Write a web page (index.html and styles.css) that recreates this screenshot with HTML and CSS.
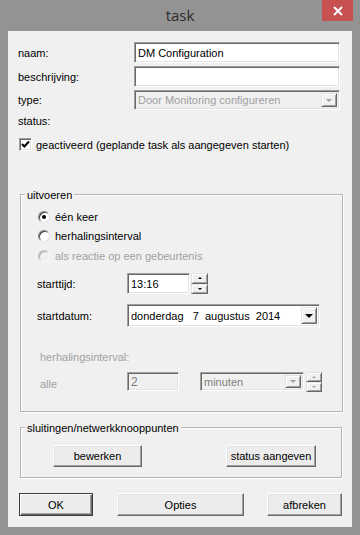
FILE: index.html
```html
<!DOCTYPE html>
<html lang="nl">
<head>
    <meta charset="UTF-8">
    <meta name="viewport" content="width=device-width, initial-scale=1.0">
    <title>task</title>
    <link rel="stylesheet" href="styles.css">
</head>
<body>
    <div class="window">
        <div class="titlebar">
            <span class="title">task</span>
            <div class="close">
                <svg width="10" height="10" viewBox="0 0 10 10"><path d="M1 1L9 9M9 1L1 9" stroke="#fff" stroke-width="2"/></svg>
            </div>
        </div>

        <div class="client">
            <div class="field">
                <span class="label">naam:</span>
                <div class="edit wide">DM Configuration</div>
            </div>
            <div class="field">
                <span class="label">beschrijving:</span>
                <div class="edit wide"></div>
            </div>
            <div class="field short">
                <span class="label">type:</span>
                <div class="edit wide combo disabled">
                    <span class="combo-text">Door Monitoring configureren</span>
                    <span class="combo-btn"><i class="arrow-down"></i></span>
                </div>
            </div>
            <div class="status">status:</div>
            <div class="check-row">
                <span class="checkbox">
                    <svg width="9" height="9" viewBox="0 0 9 9"><path d="M1 4L3.3 6.5L8 1.5" stroke="#000" stroke-width="2" fill="none"/></svg>
                </span>
                <span>geactiveerd (geplande task als aangegeven starten)</span>
            </div>

            <!-- uitvoeren -->
            <div class="group run">
                <div class="legend">uitvoeren</div>
                <div class="radio-row first">
                    <span class="radio checked"></span>
                    <span>één keer</span>
                </div>
                <div class="radio-row">
                    <span class="radio"></span>
                    <span>herhalingsinterval</span>
                </div>
                <div class="radio-row last disabled">
                    <span class="radio"></span>
                    <span>als reactie op een gebeurtenis</span>
                </div>

                <div class="row time-row">
                    <span class="label small">starttijd:</span>
                    <div class="edit time">13:16</div>
                    <div class="spin">
                        <span class="spin-btn"><i class="arrow-up"></i></span>
                        <span class="spin-btn"><i class="arrow-down"></i></span>
                    </div>
                </div>
                <div class="row date-row">
                    <span class="label small">startdatum:</span>
                    <div class="edit combo date">
                        <span class="combo-text">donderdag&nbsp;&nbsp;&nbsp;7&nbsp;&nbsp;augustus&nbsp;&nbsp;2014</span>
                        <span class="combo-btn"><i class="arrow-down big"></i></span>
                    </div>
                </div>

                <div class="interval-title disabled">herhalingsinterval:</div>
                <div class="row every-row disabled">
                    <span class="label every">alle</span>
                    <div class="edit count disabled">2</div>
                    <div class="edit combo unit disabled">
                        <span class="combo-text">minuten</span>
                        <span class="combo-btn"><i class="arrow-down"></i></span>
                    </div>
                    <div class="spin unit-spin">
                        <span class="spin-btn"><i class="arrow-up"></i></span>
                        <span class="spin-btn"><i class="arrow-down"></i></span>
                    </div>
                </div>
            </div>

            <!-- sluitingen -->
            <div class="group locks">
                <div class="legend">sluitingen/netwerkknooppunten</div>
                <div class="lock-buttons">
                    <span class="button edit-btn">bewerken</span>
                    <span class="button state-btn">status aangeven</span>
                </div>
            </div>

            <div class="dialog-buttons">
                <span class="button default ok">OK</span>
                <span class="button options">Opties</span>
                <span class="button cancel">afbreken</span>
            </div>
        </div>
    </div>
</body>
</html>
```

FILE: styles.css
```css
body {
    margin: 0;
    background: #939393;
}
.window {
    width: 360px;
    height: 535px;
    background: #939393;
    font-family: "Liberation Sans", Arial, sans-serif;
    font-size: 11px;
    color: #000;
}
.titlebar {
    height: 31px;
    display: flex;
}
.title {
    flex: 1;
    padding-left: 38px;
    text-align: center;
    font-family: "Open Sans", "Noto Sans", sans-serif;
    font-size: 15px;
    line-height: 30px;
    color: #2b2b2b;
}
.close {
    width: 31px;
    height: 21px;
    margin-right: 7px;
    background: #c75050;
    display: flex;
    align-items: center;
    justify-content: center;
}
.client {
    margin: 0 8px;
    height: 496px;
    box-sizing: border-box;
    padding: 11px 10px 0 10px;
    background: #f0f0f0;
}

/* top fields */
.field {
    display: flex;
    align-items: center;
    height: 21px;
}
.field + .field {
    margin-top: 3px;
}
.field.short {
    height: 20px;
}
.label {
    width: 116px;
    flex: none;
}
.label.small {
    width: 90px;
}
.edit {
    box-sizing: border-box;
    height: 100%;
    background: #fff;
    border: 1px solid;
    border-color: #a0a0a0 #fff #fff #a0a0a0;
    box-shadow: inset 1px 1px 0 #696969, inset -1px -1px 0 #e3e3e3;
    padding: 0 3px;
    display: flex;
    align-items: center;
    white-space: nowrap;
    overflow: hidden;
}
.edit.wide {
    width: 206px;
}
.edit.disabled {
    background: #f0f0f0;
    color: #a0a0a0;
}
.combo {
    padding: 2px 2px 2px 3px;
}
.combo-text {
    flex: 1;
}
.combo-btn {
    width: 16px;
    height: 100%;
    box-sizing: border-box;
    background: #f0f0f0;
    border: 1px solid;
    border-color: #e3e3e3 #696969 #696969 #e3e3e3;
    box-shadow: inset 1px 1px 0 #fff, inset -1px -1px 0 #a0a0a0;
    display: flex;
    align-items: center;
    justify-content: center;
}
.arrow-down, .arrow-up {
    width: 0;
    height: 0;
    border-left: 3px solid transparent;
    border-right: 3px solid transparent;
}
.arrow-down {
    border-top: 3px solid #000;
}
.arrow-up {
    border-bottom: 3px solid #000;
}
.arrow-down.big {
    border-left-width: 4px;
    border-right-width: 4px;
    border-top-width: 4px;
}
.disabled .arrow-down, .disabled .arrow-up {
    border-top-color: #a0a0a0;
    border-bottom-color: #a0a0a0;
}
.disabled .arrow-up {
    border-top-color: transparent;
}
.disabled .arrow-down {
    border-bottom-color: transparent;
}

.status {
    margin-top: 4px;
    line-height: 14px;
}
.check-row {
    margin-top: 10px;
    height: 13px;
    display: flex;
    align-items: center;
}
.checkbox {
    width: 13px;
    height: 13px;
    box-sizing: border-box;
    margin: 0 4px 0 1px;
    background: #fff;
    border: 1px solid;
    border-color: #a0a0a0 #fff #fff #a0a0a0;
    box-shadow: inset 1px 1px 0 #696969, inset -1px -1px 0 #e3e3e3;
    display: flex;
    align-items: center;
    justify-content: center;
}

/* group boxes */
.group {
    box-sizing: border-box;
    border: 1px solid #b4b4b4;
    box-shadow: inset 1px 1px 0 #fff, 1px 1px 0 #fff;
    margin-left: 2px;
    padding-left: 16px;
}
.group.run {
    width: 323px;
    height: 218px;
    margin-top: 43px;
}
.group.locks {
    width: 322px;
    height: 51px;
    margin-top: 15px;
}
.legend {
    width: fit-content;
    margin: -7px 0 0 -12px;
    padding: 0 2px;
    line-height: 14px;
    background: #f0f0f0;
}
.radio-row {
    height: 14px;
    display: flex;
    align-items: center;
    margin-top: 5px;
}
.radio-row.first {
    margin-top: 8px;
}
.radio-row.last {
    margin-top: 6px;
}
.radio {
    width: 12px;
    height: 12px;
    box-sizing: border-box;
    margin: 0 5px 0 1px;
    border-radius: 50%;
    background: #fff;
    border: 1px solid;
    border-color: #808080 #e3e3e3 #e3e3e3 #808080;
    box-shadow: inset 1px 1px 0 #404040;
    display: flex;
    align-items: center;
    justify-content: center;
}
.radio.checked::after {
    content: "";
    width: 4px;
    height: 4px;
    border-radius: 50%;
    background: #000;
}
.disabled {
    color: #a0a0a0;
}
.radio-row.disabled .radio {
    background: #f0f0f0;
    border-color: #c0c0c0 #f8f8f8 #f8f8f8 #c0c0c0;
    box-shadow: inset 1px 1px 0 #b0b0b0;
}

.row {
    display: flex;
    align-items: center;
}
.time-row {
    height: 21px;
    margin-top: 10px;
}
.edit.time {
    width: 63px;
}
.spin {
    width: 17px;
    height: 100%;
    margin-left: 1px;
    display: flex;
    flex-direction: column;
}
.spin-btn {
    flex: 1;
    box-sizing: border-box;
    background: #f0f0f0;
    border: 1px solid;
    border-color: #e3e3e3 #696969 #696969 #e3e3e3;
    box-shadow: inset 1px 1px 0 #fff, inset -1px -1px 0 #a0a0a0;
    display: flex;
    align-items: center;
    justify-content: center;
}
.spin-btn .arrow-up, .spin-btn .arrow-down {
    border-left-width: 2px;
    border-right-width: 2px;
    border-top-width: 2px;
    border-bottom-width: 2px;
}
.date-row {
    height: 23px;
    margin-top: 10px;
}
.edit.date {
    width: 193px;
}
.interval-title {
    margin: 23px 0 0 3px;
    line-height: 14px;
}
.every-row {
    height: 19px;
    margin-top: 8px;
}
.label.every {
    width: 87px;
    margin-left: 3px;
    padding-top: 4px;
}
.edit.count {
    width: 52px;
    color: #7a7a7a;
    font-size: 12px;
}
.edit.unit {
    width: 104px;
    margin-left: 21px;
    color: #808080;
}
.unit-spin {
    width: 16px;
    height: 20px;
    margin-left: 2px;
}

/* buttons */
.button {
    box-sizing: border-box;
    height: 22px;
    background: #ececec;
    border: 1px solid;
    border-color: #fff #696969 #696969 #fff;
    box-shadow: inset -1px -1px 0 #a0a0a0, inset 1px 1px 0 #e3e3e3;
    display: flex;
    align-items: center;
    justify-content: center;
    white-space: nowrap;
}
.button.default {
    border-color: #3c3c3c;
    box-shadow: inset 1px 1px 0 #fff, inset -1px -1px 0 #696969, inset -2px -2px 0 #a0a0a0;
}
.lock-buttons {
    display: flex;
    margin-top: 10px;
}
.edit-btn {
    width: 89px;
    margin-left: 16px;
}
.state-btn {
    width: 90px;
    margin-left: 84px;
}
.dialog-buttons {
    display: flex;
    margin: 15px 0 0 1px;
}
.dialog-buttons .button {
    height: 23px;
}
.ok {
    width: 74px;
}
.options {
    width: 127px;
    margin-left: 24px;
}
.cancel {
    width: 75px;
    margin-left: 23px;
}
```
